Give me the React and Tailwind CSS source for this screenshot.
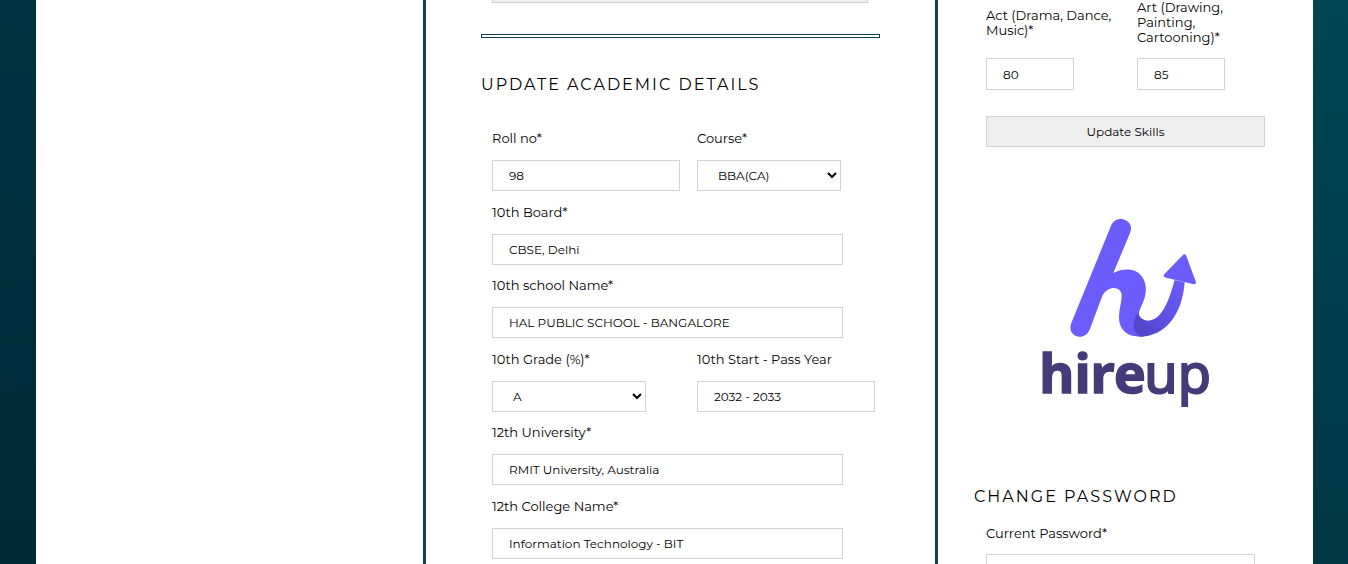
import React from "react";

const box =
  "block rounded-none border border-[#d3d3d3] bg-white px-4 text-[12px] text-black";

function Field({ id, label, value, width }) {
  return (
    <div>
      <label htmlFor={id} className="block h-[30px] text-[13px] leading-4">
        {label}
      </label>
      <input id={id} defaultValue={value} className={`${box} h-[31px] ${width}`} />
    </div>
  );
}

function SelectField({ id, label, options, width }) {
  return (
    <div>
      <label htmlFor={id} className="block h-[30px] text-[13px] leading-4">
        {label}
      </label>
      <select id={id} className={`${box} h-[31px] ${width}`}>
        {options.map((o) => (
          <option key={o}>{o}</option>
        ))}
      </select>
    </div>
  );
}

function Heading({ children }) {
  return (
    <h2 className="text-[16px] leading-5 tracking-[2px] uppercase">
      {children}
    </h2>
  );
}

function Logo() {
  return (
    <svg viewBox="0 0 570 630" className="h-[210px] w-[190px]" role="img" aria-label="hireup">
      <defs>
        <linearGradient id="tail" x1="315" y1="350" x2="470" y2="220" gradientUnits="userSpaceOnUse">
          <stop offset="0" stopColor="#5346c9" />
          <stop offset="0.45" stopColor="#6152e8" />
          <stop offset="1" stopColor="#6c5cfb" />
        </linearGradient>
      </defs>
      <path
        d="M244 60C252 42 274 37 290 47C304 56 306 70 300 84L250 204C280 189 314 190 332 210C351 231 351 261 341 287C332 309 323 325 327 335C335 350 380 348 370 370C366 392 345 395 330 395C298 395 276 381 269 355C262 325 275 297 275 272C275 243 235 239 217 272L179 374C171 392 152 400 136 392C121 384 118 369 124 354Z"
        fill="#6c5cfb"
      />
      <path
        d="M326 322C326 338 340 347 355 347C395 345 416 290 434 225L464 232C457 330 405 393 333 395C305 385 306 342 326 322Z"
        fill="url(#tail)"
      />
      <path
        d="M463 154L492 232L407 212Z"
        fill="#6c5cfb"
        stroke="#6c5cfb"
        strokeWidth="12"
        strokeLinejoin="round"
      />
      <g fontFamily="'Noto Sans', sans-serif" fill="#443b78" stroke="#443b78">
        <text x="28" y="564" fontSize="162" fontWeight="700" strokeWidth="4">hire</text>
        <text x="343" y="564" fontSize="162" fontWeight="400" strokeWidth="6">up</text>
      </g>
    </svg>
  );
}

export default function App() {
  return (
    <div className="min-h-screen bg-[linear-gradient(to_bottom,transparent,rgba(0,16,32,0.3)),linear-gradient(to_right,#003441,#004653)] pr-[35px] pl-9 font-['Montserrat','Inter',sans-serif] text-black">
      <div className="grid min-h-screen grid-cols-[387fr_512fr_378fr] bg-white">
        <aside />

        <main className="overflow-hidden border-l-[3px] border-[#12405a] pl-[55px]">
          <button
            type="button"
            aria-label="Update details"
            className="-mt-7 ml-[11px] block h-[31px] w-[376px] border border-[#d3d3d3] bg-[#eeeeee]"
          />
          <hr className="mt-[31px] h-1 w-[399px] border border-[#12405a]" />
          <div className="mt-[37px]">
            <Heading>Update Academic Details</Heading>
          </div>

          <form className="mt-[35px] ml-[11px] grid min-h-[441px] grid-rows-6">
            <div className="grid grid-cols-[205px_1fr]">
              <Field id="roll" label="Roll no*" value="98" width="w-[188px]" />
              <SelectField id="course" label="Course*" options={["BBA(CA)", "BCA", "BBA"]} width="w-36" />
            </div>
            <Field id="board10" label="10th Board*" value="CBSE, Delhi" width="w-[351px]" />
            <Field id="school10" label="10th school Name*" value="HAL PUBLIC SCHOOL - BANGALORE" width="w-[351px]" />
            <div className="grid grid-cols-[205px_1fr]">
              <SelectField id="grade10" label="10th Grade (%)*" options={["A", "B", "C"]} width="w-[154px]" />
              <Field id="year10" label="10th Start - Pass Year" value="2032 - 2033" width="w-[178px]" />
            </div>
            <Field id="univ12" label="12th University*" value="RMIT University, Australia" width="w-[351px]" />
            <Field id="college12" label="12th College Name*" value="Information Technology - BIT" width="w-[351px]" />
          </form>
        </main>

        <section className="border-l-[3px] border-[#12405a] pl-9">
          <form className="ml-3">
            <div className="grid grid-cols-[151px_1fr] gap-y-[13px]">
              <label htmlFor="act" className="w-[135px] self-center text-[13px] leading-[15px]">
                Act (Drama, Dance, Music)*
              </label>
              <label htmlFor="art" className="w-[100px] self-center text-[13px] leading-[15px]">
                Art (Drawing, Painting, Cartooning)*
              </label>
              <input id="act" defaultValue="80" className={`${box} h-8 w-[88px]`} />
              <input id="art" defaultValue="85" className={`${box} h-8 w-[88px]`} />
            </div>
            <button
              type="button"
              className="mt-[26px] block h-[31px] w-[279px] border border-[#d3d3d3] bg-[#eeeeee] text-[12px]"
            >
              Update Skills
            </button>
          </form>

          <div className="mt-[58px] ml-14">
            <Logo />
          </div>

          <div className="mt-[72px]">
            <Heading>Change Password</Heading>
          </div>
          <form className="mt-[18px] ml-3">
            <label htmlFor="current" className="block h-[29px] text-[13px] leading-4">
              Current Password*
            </label>
            <input id="current" type="password" className={`${box} h-[31px] w-[269px]`} />
          </form>
        </section>
      </div>
    </div>
  );
}
